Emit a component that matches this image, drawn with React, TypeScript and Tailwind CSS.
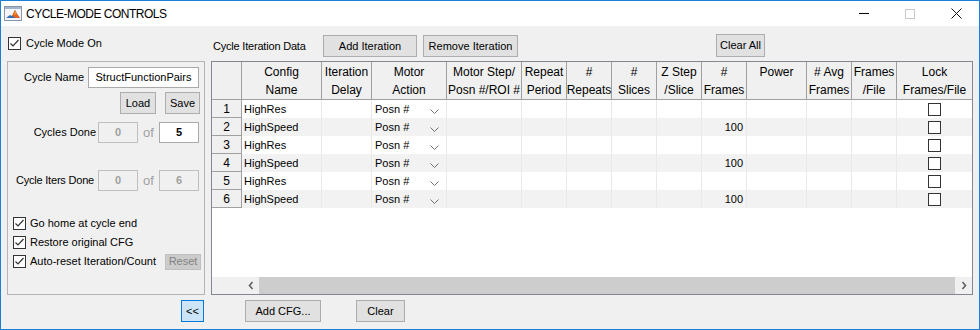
import React from "react";

const btn =
  "h-[22px] border border-[#adadad] bg-[#e1e1e1] text-[11px] text-black flex items-center justify-center shrink-0";

const cols = [
  { w: "w-[30px]", top: "", bottom: "" },
  { w: "w-[80px]", top: "Config", bottom: "Name" },
  { w: "w-[50px]", top: "Iteration", bottom: "Delay" },
  { w: "w-[75px]", top: "Motor", bottom: "Action" },
  { w: "w-[75px]", top: "Motor Step/", bottom: "Posn #/ROI #" },
  { w: "w-[45px]", top: "Repeat", bottom: "Period" },
  { w: "w-[45px]", top: "#", bottom: "Repeats" },
  { w: "w-[45px]", top: "#", bottom: "Slices" },
  { w: "w-[45px]", top: "Z Step", bottom: "/Slice" },
  { w: "w-[45px]", top: "#", bottom: "Frames" },
  { w: "w-[60px]", top: "Power", bottom: "" },
  { w: "w-[45px]", top: "# Avg", bottom: "Frames" },
  { w: "w-[45px]", top: "Frames", bottom: "/File" },
  { w: "w-[75px]", top: "Lock", bottom: "Frames/File" },
];

const rows = [
  { n: 1, name: "HighRes", frames: "" },
  { n: 2, name: "HighSpeed", frames: "100" },
  { n: 3, name: "HighRes", frames: "" },
  { n: 4, name: "HighSpeed", frames: "100" },
  { n: 5, name: "HighRes", frames: "" },
  { n: 6, name: "HighSpeed", frames: "100" },
];

function CheckBox({ checked }: { checked?: boolean }) {
  return (
    <span className="w-[13px] h-[13px] border border-[#333333] bg-white flex items-center justify-center shrink-0">
      {checked && (
        <svg width="11" height="11" viewBox="0 0 11 11">
          <path d="M1.5 5.5 L4 8 L9.5 2" stroke="#333333" strokeWidth="1.2" fill="none" />
        </svg>
      )}
    </span>
  );
}

function Chevron({ dir }: { dir: "left" | "right" }) {
  return (
    <svg width="6" height="9" viewBox="0 0 6 9">
      <path
        d={dir === "left" ? "M4.5 1 L1.5 4.5 L4.5 8" : "M1.5 1 L4.5 4.5 L1.5 8"}
        stroke="#606060"
        strokeWidth="1.6"
        fill="none"
      />
    </svg>
  );
}

function MatlabIcon() {
  return (
    <svg width="18" height="15" viewBox="0 0 18 15">
      <rect x="0.5" y="0.5" width="17" height="14" fill="#f4f6f9" stroke="#8a96a8" />
      <rect x="1" y="1" width="16" height="2" fill="#9fb4cf" />
      <path d="M2 12 L6 9 L8 10 L11 4 L13 8 L16 12 Z" fill="#2f6db5" />
      <path d="M8 10 L11 4 L13 8 L16 12 L12 12 Z" fill="#e8651e" />
      <path d="M11 4 L12.5 7.5 L10.5 9 Z" fill="#f5a623" />
    </svg>
  );
}

function Cell({ w, last, children, className }: { w: string; last?: boolean; children?: React.ReactNode; className?: string }) {
  return (
    <div className={`${w} h-full shrink-0 flex items-center ${last ? "" : "border-r border-[#e9e9e9]"} ${className ?? ""}`}>
      {children}
    </div>
  );
}

export default function App() {
  return (
    <div className="w-[980px] h-[330px] border border-[#1c7fd6] bg-[#f0f0f0] flex flex-col font-['Liberation_Sans',Arial,sans-serif] text-black overflow-hidden">
      {/* title bar */}
      <div className="h-[25px] bg-white flex items-center shrink-0">
        <div className="ml-[3px] -mt-[1px]">
          <MatlabIcon />
        </div>
        <span className="ml-[4px] text-[12px] tracking-[-0.5px] text-black">CYCLE-MODE CONTROLS</span>
        <div className="ml-auto flex h-full">
          <div className="w-[46px] flex items-center justify-center">
            <span className="w-[10px] h-px bg-black" />
          </div>
          <div className="w-[46px] flex items-center justify-center">
            <span className="w-[10px] h-[10px] border border-[#c8c8c8]" />
          </div>
          <div className="w-[46px] flex items-center justify-center">
            <svg width="11" height="11" viewBox="0 0 11 11">
              <path d="M0.5 0.5 L10.5 10.5 M10.5 0.5 L0.5 10.5" stroke="#111" strokeWidth="1" />
            </svg>
          </div>
        </div>
      </div>

      {/* top controls */}
      <div className="h-[35px] flex shrink-0">
        <div className="w-[210px] flex items-center pl-[7px] gap-[5px] text-[11px]">
          <CheckBox checked />
          <span>Cycle Mode On</span>
        </div>
        <div className="flex items-start pt-[9px] pl-[2px]">
          <span className="w-[110px] h-[22px] flex items-center text-[11px] tracking-[-0.2px]">Cycle Iteration Data</span>
          <button className={`${btn} w-[94px]`}>Add Iteration</button>
          <button className={`${btn} w-[95px] ml-[6px]`}>Remove Iteration</button>
          <button className={`${btn} w-[49px] h-[23px] ml-[198px] -mt-[1px]`}>Clear All</button>
        </div>
      </div>

      {/* panel + table */}
      <div className="h-[234px] flex shrink-0">
        <div className="ml-[6px] w-[198px] border border-[#b4b4b4] flex flex-col text-[11px]">
          <div className="mt-[5px] flex items-center h-[21px]">
            <span className="w-[76px] text-right">Cycle Name</span>
            <span className="ml-[4px] w-[111px] h-[21px] border border-[#a9a9a9] bg-white flex items-center justify-center">
              StructFunctionPairs
            </span>
          </div>
          <div className="mt-[4px] flex justify-end pr-[4px]">
            <button className={`${btn} w-[36px] h-[21px]`}>Load</button>
            <button className={`${btn} w-[35px] h-[21px] ml-[9px]`}>Save</button>
          </div>
          <div className="mt-[8px] flex items-center h-[21px]">
            <span className="w-[88px] text-right">Cycles Done</span>
            <span className="ml-[2px] w-[40px] h-[21px] border border-[#bfbfbf] flex items-center justify-center font-bold text-[#a0a0a0]">0</span>
            <span className="w-[21px] text-center text-[13px] text-[#a0a0a0]">of</span>
            <span className="w-[40px] h-[21px] border border-[#a9a9a9] bg-white flex items-center justify-center font-bold">5</span>
          </div>
          <div className="mt-[27px] flex items-center h-[21px]">
            <span className="w-[88px] text-right pr-[2px] tracking-[-0.2px]">Cycle Iters Done</span>
            <span className="ml-[2px] w-[40px] h-[21px] border border-[#bfbfbf] flex items-center justify-center font-bold text-[#a0a0a0]">0</span>
            <span className="w-[21px] text-center text-[13px] text-[#a0a0a0]">of</span>
            <span className="w-[40px] h-[21px] border border-[#bfbfbf] flex items-center justify-center font-bold text-[#a0a0a0]">6</span>
          </div>
          <div className="mt-[23px] flex flex-col pl-[5px]">
            <div className="h-[19px] flex items-center gap-[4px]">
              <CheckBox checked />
              <span>Go home at cycle end</span>
            </div>
            <div className="h-[19px] flex items-center gap-[4px]">
              <CheckBox checked />
              <span>Restore original CFG</span>
            </div>
            <div className="h-[19px] flex items-center gap-[4px]">
              <CheckBox checked />
              <span>Auto-reset Iteration/Count</span>
              <span className="ml-auto mr-[3px] w-[36px] h-[16px] border border-[#bfbfbf] bg-[#cccccc] text-[#838383] flex items-center justify-center">
                Reset
              </span>
            </div>
          </div>
        </div>

        {/* table */}
        <div className="ml-[6px] w-[762px] border border-[#828790] bg-white flex flex-col">
          <div className="h-[38px] flex border-b border-[#a0a0a0] bg-[#f0f0f0] shrink-0">
            {cols.map((c, i) => (
              <div
                key={i}
                className={`${c.w} shrink-0 flex flex-col items-center text-[12px] leading-[18px] pt-[1px] ${
                  i === cols.length - 1 ? "" : "border-r border-[#a0a0a0]"
                }`}
              >
                <span>{c.top}</span>
                <span>{c.bottom}</span>
              </div>
            ))}
          </div>
          {rows.map((r) => (
            <div key={r.n} className={`h-[18px] flex text-[11px] shrink-0 ${r.n % 2 === 0 ? "bg-[#f2f2f2]" : "bg-white"}`}>
              <div className="w-[30px] h-full shrink-0 bg-[#f0f0f0] border-r border-b border-[#a0a0a0] flex items-center justify-center text-[12px]">
                {r.n}
              </div>
              <Cell w="w-[80px]" className="pl-[2px]">{r.name}</Cell>
              <Cell w="w-[50px]" />
              <Cell w="w-[75px]" className="pl-[3px]">
                <span>Posn #</span>
                <span className="ml-auto mr-[7px] mt-[4px]">
                  <svg width="9" height="5" viewBox="0 0 9 5">
                    <path d="M0.5 0.5 L4.5 4.5 L8.5 0.5" stroke="#707070" fill="none" />
                  </svg>
                </span>
              </Cell>
              <Cell w="w-[75px]" />
              <Cell w="w-[45px]" />
              <Cell w="w-[45px]" />
              <Cell w="w-[45px]" />
              <Cell w="w-[45px]" />
              <Cell w="w-[45px]" className="justify-end pr-[3px]">{r.frames}</Cell>
              <Cell w="w-[60px]" />
              <Cell w="w-[45px]" />
              <Cell w="w-[45px]" />
              <Cell w="w-[75px]" last className="justify-center">
                <CheckBox />
              </Cell>
            </div>
          ))}
          <div className="mt-auto h-[17px] flex bg-[#f0f0f0] shrink-0">
            <div className="w-[30px] shrink-0" />
            <div className="w-[17px] shrink-0 flex items-center justify-center">
              <Chevron dir="left" />
            </div>
            <div className="flex-1 bg-[#cdcdcd]" />
            <div className="w-[17px] shrink-0 flex items-center justify-center">
              <Chevron dir="right" />
            </div>
          </div>
        </div>
      </div>

      {/* bottom buttons */}
      <div className="h-[34px] flex items-start pt-[5px] shrink-0">
        <button className="ml-[180px] w-[23px] h-[22px] border border-[#0078d7] bg-[#cce4f7] text-[11px] flex items-center justify-center">
          &lt;&lt;
        </button>
        <button className={`${btn} ml-[41px] w-[76px]`}>Add CFG...</button>
        <button className={`${btn} ml-[35px] w-[49px]`}>Clear</button>
      </div>
    </div>
  );
}
